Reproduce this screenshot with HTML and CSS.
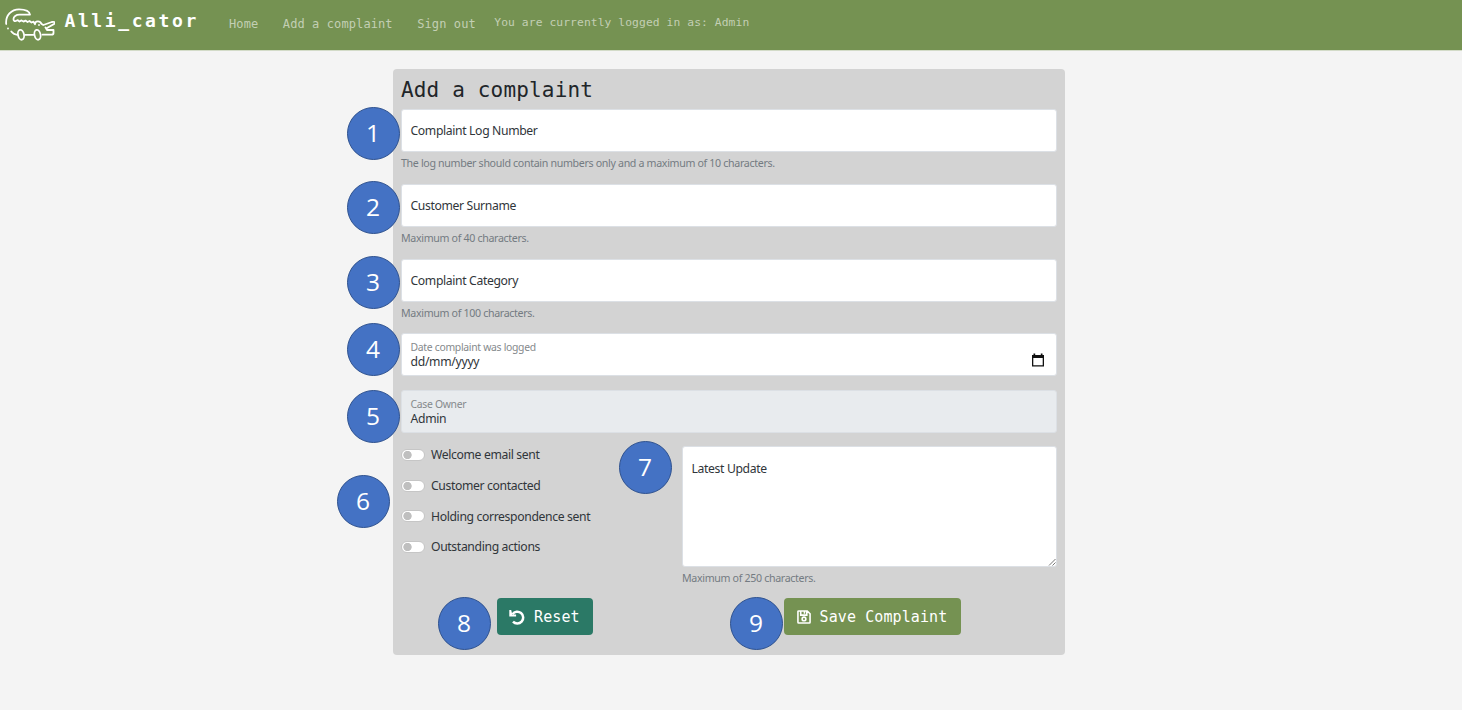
FILE: index.html
```html
<!DOCTYPE html>
<html lang="en">
<head>
<meta charset="utf-8">
<title>Alli_cator</title>
<link rel="stylesheet" href="styles.css">
</head>
<body>
<nav class="navbar">
  <svg class="logo" viewBox="0 0 50 34" fill="none" stroke="#fff" stroke-width="1.8" stroke-linecap="round" stroke-linejoin="round">
    <path d="M1.200 16C.3 7.500 6.500 1.300 14 1.300c6 0 10.500 1.600 11 5.400H14.500c-3.500 0-6 2-6 4.300 0 1.800 1 2.500 2.300 2l2-.8 1.700 1.300 2-1.100 2 1.200 2-1 2 1.400 2-1 2 1.500 2-.8 1.500 2.500c0-3.500 5-3.800 6.300-.5l2 1.300 8.500-3c2.500-.6 3 .2 3 1.500l-7.300 4.300M40.500 19.500l1.500 2.500h6.500v3c0 1.200-.8 1.700-2 1.700h-9"/>
    <path d="M3 20.500v.1M6.300 23.500c1.800 2.200 3.500 3.200 6 3.300M20 26.800h8.500M34 17v.1"/>
    <ellipse cx="16" cy="26.800" rx="3" ry="5" transform="rotate(-12 16 26.800)"/>
    <ellipse cx="32.500" cy="26.800" rx="3" ry="5" transform="rotate(-12 32.500 26.800)"/>
  </svg>
  <span class="brand">Alli_cator</span>
  <a class="nav-link">Home</a>
  <a class="nav-link">Add a complaint</a>
  <a class="nav-link">Sign out</a>
  <span class="user">You are currently logged in as: Admin</span>
</nav>
<main class="panel">
  <h1 class="title">Add a complaint</h1>
  <div class="field box"><span class="label">Complaint Log Number</span></div>
  <p class="hint">The log number should contain numbers only and a maximum of 10 characters.</p>
  <div class="field box"><span class="label">Customer Surname</span></div>
  <p class="hint">Maximum of 40 characters.</p>
  <div class="field box"><span class="label">Complaint Category</span></div>
  <p class="hint">Maximum of 100 characters.</p>
  <div class="field filled date">
    <div><div class="small-label">Date complaint was logged</div><div class="value">dd/mm/yyyy</div></div>
    <svg class="calendar" viewBox="0 0 12 14"><path d="M0 2h1.500V.5h1.700V2h5.600V.5h1.700V2H12v11.500H0ZM1.300 5v7.200h9.400V5Z" fill="#111" fill-rule="evenodd"/></svg>
  </div>
  <div class="field filled owner">
    <div><div class="small-label">Case Owner</div><div class="value">Admin</div></div>
  </div>
  <div class="lower">
    <div class="switches">
      <div class="row"><i class="switch"></i><span>Welcome email sent</span></div>
      <div class="row"><i class="switch"></i><span>Customer contacted</span></div>
      <div class="row"><i class="switch"></i><span>Holding correspondence sent</span></div>
      <div class="row"><i class="switch"></i><span>Outstanding actions</span></div>
    </div>
    <div class="update">
      <div class="field area"><span class="label">Latest Update</span>
        <svg class="grip" viewBox="0 0 8 8"><path d="M1 7.500 7.500 1M4.500 7.500l3-3" stroke="#777" stroke-width="1" fill="none"/></svg>
      </div>
      <p class="hint">Maximum of 250 characters.</p>
    </div>
  </div>
  <div class="actions">
    <div class="button reset">
      <svg class="undo" viewBox="0 0 16 16"><path d="M3.500 5.200A5.900 5.900 0 1 1 4 12.700" fill="none" stroke="#fff" stroke-width="2.500"/><path d="M.3.900v6.500h6.800V5.500H3.300L2.200.900Z" fill="#fff"/></svg>
      <span>Reset</span>
    </div>
    <div class="button save">
      <svg class="disk" viewBox="0 0 15 15" fill="none" stroke="#fff" stroke-width="1.700"><path d="M1 1.800q0-.8.800-.8H11l3 3v9.200q0 .8-.8.800H1.800Q1 14 1 13.200ZM4 1v4.500h6.500V1M8 1v3"/><circle cx="7.500" cy="9.600" r="2"/></svg>
      <span>Save Complaint</span>
    </div>
  </div>
</main>
<div class="pin p1">1</div><div class="pin p2">2</div><div class="pin p3">3</div>
<div class="pin p4">4</div><div class="pin p5">5</div><div class="pin p6">6</div>
<div class="pin p7">7</div><div class="pin p8">8</div><div class="pin p9">9</div>
</body>
</html>
```
FILE: styles.css
```css
* { box-sizing: border-box; }
body { margin: 0; height: 710px; overflow: hidden; background: #f4f4f4; color: #30353a; font: 12.2px/18px "Noto Sans", "Open Sans", sans-serif; letter-spacing: -.36px; }
.navbar { height: 50px; background: #759252; display: flex; align-items: flex-start; padding-left: 5px; font-family: "DejaVu Sans Mono", monospace; white-space: pre; box-shadow: 0 1px 0 #d3dbc8; }
.logo { width: 50px; height: 34px; margin-top: 8px; }
.brand { width: 164px; padding-left: 9.500px; margin-top: 8px; font-size: 18px; line-height: 26px; font-weight: 700; letter-spacing: 2.600px; color: #fff; }
.nav-link { margin: 15px 24.500px 0 0; font-size: 12px; letter-spacing: .1px; color: #c3cfb4; }
.nav-link + .user { margin-left: -6px; }
.nav-link:first-of-type { margin-left: 10px; }
.user { margin-top: 14px; font-size: 11.300px; letter-spacing: .09px; color: #c3cfb4; }
.panel { width: 672px; height: 586px; margin: 19px 0 0 393px; padding: 8px 8.500px 0 8px; border-radius: 4px; background: #d3d3d3; }
.title { margin: 0 0 6px; font: 400 21px/26px "DejaVu Sans Mono", monospace; letter-spacing: .16px; color: #212529; }
.field { height: 43px; border: 1px solid #dce0e5; border-radius: 3px; background: #fff; padding: 0 9px 0 8.500px; display: flex; }
.box { align-items: center; padding-top: 1px; }
.hint { margin: 3px 0 11.800px; height: 17px; line-height: 16px; font-size: 10.650px; letter-spacing: -.33px; color: #737b82; }
.filled { margin-bottom: 13.500px; padding-top: 5px; justify-content: space-between; }
.small-label { font-size: 10.400px; line-height: 16px; letter-spacing: -.3px; color: #85898c; }
.value { line-height: 14.500px; letter-spacing: -.3px; }
.calendar { width: 12px; height: 14px; margin: 14px 3px 0 0; }
.owner { background: #e8ebee; }
.lower { display: flex; height: 152px; }
.switches { width: 281px; }
.row { display: flex; align-items: center; gap: 6px; height: 18px; margin-bottom: 12.700px; }
.switch { width: 24px; height: 12px; margin-bottom: 1px; border: 1px solid #c6c6c6; border-radius: 6px; background: radial-gradient(circle at 5.500px 5px, #bfbfbf 3.800px, #fff 4.500px); }
.update { flex: 1; }
.area { position: relative; height: 121px; padding-top: 13px; }
.grip { position: absolute; right: 0; bottom: 0; width: 8px; height: 8px; }
.actions { display: flex; padding-left: 95.500px; gap: 191px; }
.button { height: 37px; padding-top: 1px; border-radius: 4px; display: flex; align-items: center; color: #fff; font: 15px/20px "DejaVu Sans Mono", monospace; letter-spacing: .1px; white-space: pre; }
.reset { width: 96.500px; padding-left: 12.500px; gap: 9px; background: #2b7966; }
.save { width: 177px; padding-left: 13px; gap: 8.500px; background: #759252; }
.undo { width: 16px; height: 16px; }
.disk { width: 14px; height: 14px; }
.pin { position: absolute; width: 53px; height: 53px; border: 1.500px solid #2f528f; border-radius: 50%; background: #4472c4; color: #fff; font: 24.500px/50px "Open Sans", sans-serif; letter-spacing: 0; text-align: center; padding-right: 1px; }
.p1 { left: 347px; top: 107px; }
.p2 { left: 347px; top: 181.400px; }
.p3 { left: 347px; top: 256px; }
.p4 { left: 347px; top: 323px; }
.p5 { left: 347px; top: 390px; }
.p6 { left: 337px; top: 475.400px; }
.p7 { left: 619px; top: 441.400px; }
.p8 { left: 438px; top: 597px; }
.p9 { left: 730px; top: 597px; }
```
